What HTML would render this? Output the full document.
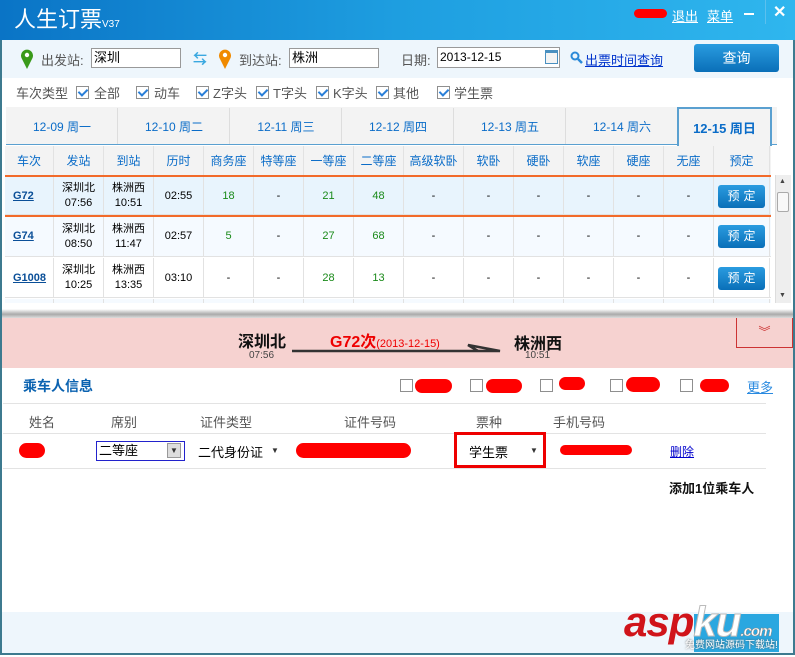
<!DOCTYPE html>
<html><head><meta charset="utf-8"><style>
*{margin:0;padding:0;box-sizing:border-box}
body{width:795px;height:655px;overflow:hidden;position:relative;background:#fff;font-family:"Liberation Sans","Noto Sans CJK SC",sans-serif;font-size:12px;color:#333}
.a{position:absolute}
.c{display:flex;align-items:center;justify-content:center;text-align:center}
.red{background:#f00;border-radius:8px;position:absolute}
.cb{position:absolute;width:13px;height:13px;border:1px solid #8f8f8f;background:#fff}
.cb:after{content:"";position:absolute;left:3px;top:0px;width:4px;height:7px;border:solid #2a7fd8;border-width:0 2px 2px 0;transform:rotate(45deg)}
.cbe{position:absolute;width:13px;height:13px;border:1px solid #8f8f8f;background:#fff}
.btn{position:absolute;background:linear-gradient(#2a9ce0,#0a6fb8);color:#fff;border-radius:3px;display:flex;align-items:center;justify-content:center}
.lb{position:absolute;top:83px;font-size:13px;color:#555}
</style></head><body>
<div class="a" style="left:0;top:0;width:795px;height:655px;border:2px solid #3d7a8f;border-top:0"></div>
<div class="a" style="left:0;top:0;width:795px;height:40px;background:linear-gradient(90deg,#0a74c6,#1e9ee0 50%,#2fb6ee)"></div>
<div class="a" style="left:14px;top:5px;color:#fff;font-size:22px;line-height:30px">人生订票<span style="font-size:10px">V37</span></div>
<div class="red" style="left:634px;top:9px;width:33px;height:9px"></div>
<div class="a" style="left:672px;top:6px;color:#fff;font-size:13px;text-decoration:underline">退出</div>
<div class="a" style="left:707px;top:6px;color:#fff;font-size:13px;text-decoration:underline">菜单</div>
<div class="a" style="left:744px;top:13px;width:10px;height:2px;background:#fff"></div>
<div class="a" style="left:765px;top:0;width:1px;height:24px;background:#5cc0ee"></div>
<div class="a" style="left:773px;top:2px;color:#fff;font-size:16px;font-weight:bold">✕</div>
<div class="a" style="left:2px;top:40px;width:791px;height:38px;background:#eef6fc"></div>
<svg class="a" style="left:20px;top:48px" width="14" height="22"><path d="M7 21 L1.5 10 A6 6 0 1 1 12.5 10 Z" fill="#3a9a1a"/><circle cx="7" cy="7" r="2.2" fill="#fff"/></svg>
<div class="a" style="left:41px;top:50px;font-size:13px;color:#555">出发站:</div>
<div class="a" style="left:91px;top:48px;width:90px;height:20px;border:1px solid #999;background:#fff;font-size:13px;color:#000;padding-left:2px;line-height:18px">深圳</div>
<div class="a" style="left:193px;top:49px;color:#3aa8e0;font-size:14px;font-weight:bold">⇆</div>
<svg class="a" style="left:218px;top:48px" width="14" height="22"><path d="M7 21 L1.5 10 A6 6 0 1 1 12.5 10 Z" fill="#f08a00"/><circle cx="7" cy="7" r="2.2" fill="#fff"/></svg>
<div class="a" style="left:239px;top:50px;font-size:13px;color:#555">到达站:</div>
<div class="a" style="left:289px;top:48px;width:90px;height:20px;border:1px solid #999;background:#fff;font-size:13px;color:#000;padding-left:2px;line-height:18px">株洲</div>
<div class="a" style="left:401px;top:50px;font-size:13px;color:#555">日期:</div>
<div class="a" style="left:437px;top:47px;width:123px;height:21px;border:1px solid #999;background:#fff;font-size:12px;color:#000;padding-left:2px;line-height:18px">2013-12-15</div>
<div class="a" style="left:545px;top:50px;width:13px;height:14px;border:1px solid #4a90c0;border-top:3px solid #4a90c0;background:#f4f4f4"></div>
<svg class="a" style="left:570px;top:51px" width="13" height="13"><circle cx="5" cy="5" r="3.5" fill="none" stroke="#2b8ad8" stroke-width="2"/><path d="M8 8 L12 12" stroke="#2b8ad8" stroke-width="2.5"/></svg>
<div class="a" style="left:585px;top:50px;color:#0033cc;font-size:13px;text-decoration:underline">出票时间查询</div>
<div class="btn" style="left:694px;top:44px;width:85px;height:28px;font-size:14px">查询</div>
<div class="lb" style="left:16px">车次类型</div>
<div class="cb" style="left:76px;top:86px"></div><div class="lb" style="left:94px">全部</div>
<div class="cb" style="left:136px;top:86px"></div><div class="lb" style="left:154px">动车</div>
<div class="cb" style="left:196px;top:86px"></div><div class="lb" style="left:213px">Z字头</div>
<div class="cb" style="left:256px;top:86px"></div><div class="lb" style="left:273px">T字头</div>
<div class="cb" style="left:316px;top:86px"></div><div class="lb" style="left:333px">K字头</div>
<div class="cb" style="left:376px;top:86px"></div><div class="lb" style="left:393px">其他</div>
<div class="cb" style="left:437px;top:86px"></div><div class="lb" style="left:454px">学生票</div>
<div class="a" style="left:6px;top:107px;width:771px;height:38px;background:#f3f3f3;border-bottom:1px solid #5aa0d0"></div>
<div class="a c" style="left:7px;top:108px;width:111px;height:36px;color:#0a6cc8;border-right:1px solid #ddd">12-09 周一</div>
<div class="a c" style="left:119px;top:108px;width:111px;height:36px;color:#0a6cc8;border-right:1px solid #ddd">12-10 周二</div>
<div class="a c" style="left:231px;top:108px;width:111px;height:36px;color:#0a6cc8;border-right:1px solid #ddd">12-11 周三</div>
<div class="a c" style="left:343px;top:108px;width:111px;height:36px;color:#0a6cc8;border-right:1px solid #ddd">12-12 周四</div>
<div class="a c" style="left:455px;top:108px;width:111px;height:36px;color:#0a6cc8;border-right:1px solid #ddd">12-13 周五</div>
<div class="a c" style="left:567px;top:108px;width:110px;height:36px;color:#0a6cc8">12-14 周六</div>
<div class="a c" style="left:677px;top:107px;width:95px;height:39px;color:#0a6cc8;background:#f3f3f3;border:2px solid #5aa0d0;border-bottom:0;font-weight:bold;font-size:13px">12-15 周日</div>
<div id="tbl" class="a" style="left:5px;top:146px;width:766px;height:157px;overflow:hidden"></div>
<div class="a" style="left:775px;top:175px;width:16px;height:128px;background:#eee;border-left:1px solid #ddd"></div>
<div class="a" style="left:777px;top:192px;width:12px;height:20px;background:#f8f8f8;border:1px solid #aaa;border-radius:2px"></div>
<div class="a" style="left:779px;top:178px;font-size:7px;color:#444">▲</div>
<div class="a" style="left:779px;top:292px;font-size:7px;color:#444">▼</div>
<div class="a" style="left:2px;top:303px;width:791px;height:15px;background:linear-gradient(#fff,#fff 40%,#aaa 75%,#ddd)"></div>
<div class="a" style="left:2px;top:318px;width:791px;height:50px;background:#f6d2d0"></div>
<div class="a" style="left:736px;top:318px;width:57px;height:30px;border:1px solid #c33;border-top:0;color:#c33;text-align:center;font-size:12px;line-height:28px">︾</div>
<div class="a" style="left:238px;top:328px;font-size:16px;font-weight:bold;color:#111">深圳北</div>
<div class="a" style="left:249px;top:350px;font-size:10px;color:#444">07:56</div>
<div class="a" style="left:330px;top:328px;font-size:16px;font-weight:bold;color:#e00">G72次<span style="font-size:11px;font-weight:normal">(2013-12-15)</span></div>
<svg class="a" style="left:290px;top:343px" width="215" height="12"><path d="M2 8 H210 L178 2 L188 8" fill="none" stroke="#333" stroke-width="2.5"/></svg>
<div class="a" style="left:514px;top:330px;font-size:16px;font-weight:bold;color:#111">株洲西</div>
<div class="a" style="left:525px;top:350px;font-size:10px;color:#444">10:51</div>
<div class="a" style="left:23px;top:376px;font-size:14px;font-weight:bold;color:#0a62b0">乘车人信息</div>
<div class="cbe" style="left:400px;top:379px"></div><div class="red" style="left:415px;top:379px;width:37px;height:14px"></div>
<div class="cbe" style="left:470px;top:379px"></div><div class="red" style="left:486px;top:379px;width:36px;height:14px"></div>
<div class="cbe" style="left:540px;top:379px"></div><div class="red" style="left:559px;top:377px;width:26px;height:13px"></div>
<div class="cbe" style="left:610px;top:379px"></div><div class="red" style="left:626px;top:377px;width:34px;height:15px"></div>
<div class="cbe" style="left:680px;top:379px"></div><div class="red" style="left:700px;top:379px;width:29px;height:13px"></div>
<div class="a" style="left:747px;top:377px;font-size:13px;color:#2a8ae0;text-decoration:underline">更多</div>
<div class="a" style="left:3px;top:403px;width:763px;height:1px;background:#e3e3e3"></div>
<div class="a" style="left:29px;top:412px;font-size:13px;color:#555">姓名</div>
<div class="a" style="left:111px;top:412px;font-size:13px;color:#555">席别</div>
<div class="a" style="left:200px;top:412px;font-size:13px;color:#555">证件类型</div>
<div class="a" style="left:344px;top:412px;font-size:13px;color:#555">证件号码</div>
<div class="a" style="left:476px;top:412px;font-size:13px;color:#555">票种</div>
<div class="a" style="left:553px;top:412px;font-size:13px;color:#555">手机号码</div>
<div class="a" style="left:3px;top:433px;width:763px;height:1px;background:#e3e3e3"></div>
<div class="red" style="left:19px;top:443px;width:26px;height:15px"></div>
<div class="a" style="left:96px;top:441px;width:89px;height:20px;border:1px solid #22c;font-size:13px;color:#000;line-height:18px;padding-left:2px;background:#fff">二等座</div>
<div class="a" style="left:167px;top:443px;width:14px;height:15px;background:#ddd;border:1px solid #999;font-size:8px;text-align:center;line-height:13px">▼</div>
<div class="a" style="left:198px;top:442px;font-size:13px;color:#000">二代身份证</div>
<div class="a" style="left:271px;top:446px;font-size:8px">▼</div>
<div class="red" style="left:296px;top:443px;width:115px;height:15px"></div>
<div class="a" style="left:454px;top:432px;width:92px;height:36px;border:3px solid #e00"></div>
<div class="a" style="left:469px;top:442px;font-size:13px;color:#000">学生票</div>
<div class="a" style="left:530px;top:446px;font-size:8px">▼</div>
<div class="red" style="left:560px;top:445px;width:72px;height:10px"></div>
<div class="a" style="left:670px;top:443px;font-size:12px;color:#00c;text-decoration:underline">删除</div>
<div class="a" style="left:3px;top:468px;width:763px;height:1px;background:#e3e3e3"></div>
<div class="a" style="left:669px;top:478px;font-size:13px;font-weight:bold;color:#111">添加1位乘车人</div>
<div class="a" style="left:2px;top:612px;width:791px;height:41px;background:#eef6fc"></div>
<div class="a" style="left:694px;top:614px;width:85px;height:38px;background:#2aa7e0"></div>
<div class="a" style="left:624px;top:597px;font-size:42px;font-style:italic;font-weight:bold;color:#d0141a;letter-spacing:-1px;line-height:50px">asp<span style="color:#fff;-webkit-text-stroke:1px #bbb">ku</span><span style="font-size:15px;color:#fff;-webkit-text-stroke:0.5px #888">.com</span></div>
<div class="a" style="left:685px;top:636px;font-size:10px;color:#fff;text-shadow:0 0 2px #555">免费网站源码下载站!</div>
<script>
var cols=[5,54,104,154,204,254,304,354,404,464,514,564,614,664,714,770];
var hd=["车次","发站","到站","历时","商务座","特等座","一等座","二等座","高级软卧","软卧","硬卧","软座","硬座","无座","预定"];
var rows=[["G72","深圳北<br>07:56","株洲西<br>10:51","02:55","18","-","21","48"],
["G74","深圳北<br>08:50","株洲西<br>11:47","02:57","5","-","27","68"],
["G1008","深圳北<br>10:25","株洲西<br>13:35","03:10","-","-","28","13"]];
var h="";var T=document.getElementById("tbl");
function cell(i,top,hgt,html,st){return '<div class="a c" style="left:'+(cols[i]-5)+'px;top:'+top+'px;width:'+(cols[i+1]-cols[i])+'px;height:'+hgt+'px;border-right:1px solid #e2e2e2;'+st+'">'+html+'</div>';}
h+='<div class="a" style="left:0;top:0;width:766px;height:29px;background:#f3f3f3"></div>';
for(var i=0;i<15;i++)h+=cell(i,0,29,hd[i],"color:#0a6cc8;font-size:12px;");
h+='<div class="a" style="left:0;top:29px;width:766px;height:2px;background:#f26a2a"></div>';
var tops=[31,70,112,153],hs=[38,41,40,20],bg=["#e8f4fd","#f5faff","#fff","#f5faff"];
for(var r=0;r<4;r++){
 h+='<div class="a" style="left:0;top:'+tops[r]+'px;width:766px;height:'+hs[r]+'px;background:'+bg[r]+';border-bottom:1px solid #e2e2e2"></div>';
 if(r==3){for(var i=0;i<15;i++)h+=cell(i,tops[r],hs[r],"","");continue;}
 var d=rows[r];
 for(var i=0;i<15;i++){
  var t,st="font-size:11px;line-height:15px;color:#000;";
  if(i==0){t='<u style="font-weight:bold;color:#0a4f98">'+d[0]+'</u>';st+="justify-content:flex-start;padding-left:8px;";}
  else if(i<4)t=d[i];
  else if(i<8){t=d[i];if(t!="-")st+="color:#1a8a1a;";}
  else if(i<14)t="-";
  else t='<div style="width:47px;height:23px;background:linear-gradient(#2a9ce0,#0a6fb8);color:#fff;border-radius:3px;font-size:12px;line-height:23px;letter-spacing:4px;text-indent:4px">预定</div>';
  h+=cell(i,tops[r],hs[r],t,st);
 }
}
h+='<div class="a" style="left:0;top:69px;width:766px;height:2px;background:#f26a2a"></div>';
T.innerHTML=h;
</script>
</body></html>
